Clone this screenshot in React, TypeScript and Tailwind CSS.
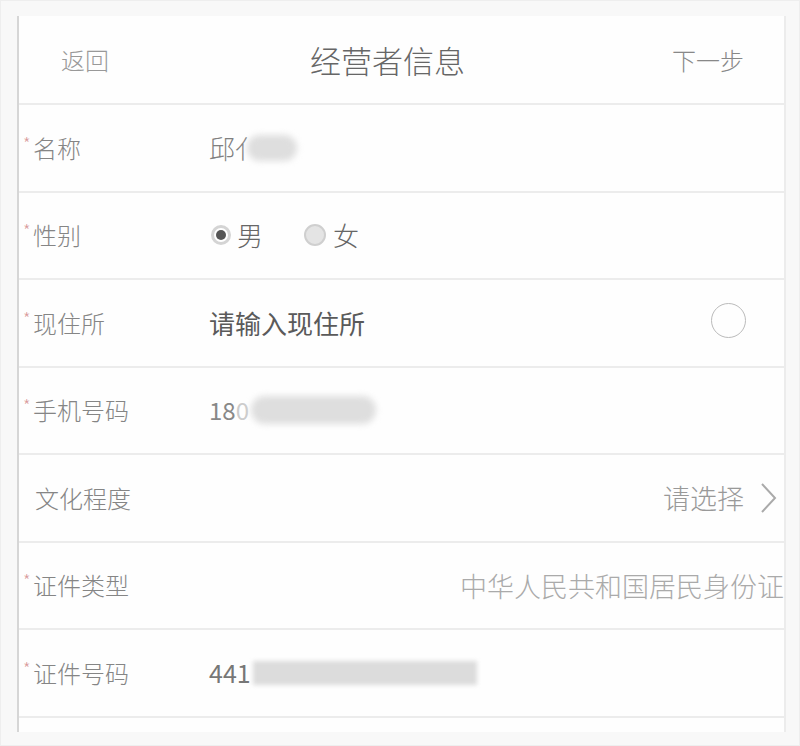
import React from "react";

const font = { fontFamily: '"Noto Sans CJK SC", "Noto Sans", sans-serif' };

function Star() {
  return <span className="text-[#d99a9a] text-[17px] leading-none self-start -mt-[2px] w-[10px]">*</span>;
}

function Row({ children, h = "h-[87.5px]" }: { children: React.ReactNode; h?: string }) {
  return (
    <div className={`${h} flex items-center border-b-2 border-[#ececec] shrink-0`}>{children}</div>
  );
}

function Label({ text, star = true }: { text: string; star?: boolean }) {
  return (
    <div className="w-[192px] pl-[4px] flex items-center text-[24px] text-[#858585] font-light">
      {star ? <Star /> : <span className="w-[12px]" />}
      <span className="leading-none">{text}</span>
    </div>
  );
}

function Blur({ w, h }: { w: string; h: string }) {
  return <div className={`${w} ${h} bg-[#dedede] rounded-full blur-[3px]`} />;
}

export default function App() {
  return (
    <div className="w-[800px] h-[746px] bg-[#f8f8f8] pt-[15px] pl-[16px] pr-[13px] border border-[#eeeeee]" style={font}>
      <div className="h-[716px] bg-[#fefefe] border-l-2 border-[#d6d6d6] border-r-2 border-r-[#ececec] flex flex-col">
        <div className="h-[89px] flex items-center justify-between border-b-2 border-[#ececec] shrink-0 px-[42px] pr-[40px]">
          <span className="text-[24px] text-[#999] font-light leading-none">返回</span>
          <span className="text-[31px] text-[#666] font-light leading-none -ml-[6px]">经营者信息</span>
          <span className="text-[24px] text-[#888] font-light leading-none">下一步</span>
        </div>
        <Row>
          <Label text="名称" />
          <div className="flex items-center -ml-[2px]">
            <span className="text-[26px] text-[#808080] font-light leading-none">邱亻</span>
            <div className="-ml-[14px]"><Blur w="w-[50px]" h="h-[26px]" /></div>
          </div>
        </Row>
        <Row>
          <Label text="性别" />
          <div className="flex items-center text-[26px] text-[#666] font-light">
            <span className="w-[20px] h-[20px] rounded-full border-[3px] border-[#d4d4d4] bg-white flex items-center justify-center">
              <span className="w-[10px] h-[10px] rounded-full bg-[#555]" />
            </span>
            <span className="ml-[6px] leading-none">男</span>
            <span className="ml-[41px] w-[22px] h-[22px] rounded-full border-2 border-[#cfcfcf] bg-[#e4e4e4]" />
            <span className="ml-[7px] leading-none">女</span>
          </div>
        </Row>
        <Row>
          <Label text="现住所" />
          <span className="text-[26px] text-[#5a5a5a] leading-none flex-1 -ml-[2px]">请输入现住所</span>
          <span className="w-[35px] h-[35px] rounded-full border-[1.5px] border-[#bbb] mr-[38px] -mt-[4px]" />
        </Row>
        <Row>
          <Label text="手机号码" />
          <div className="flex items-center -ml-[2px]">
            <span className="text-[24px] text-[#888] leading-none">18</span>
            <span className="text-[24px] text-[#ccc] leading-none">0</span>
            <div className="ml-[2px]"><Blur w="w-[125px]" h="h-[28px]" /></div>
          </div>
        </Row>
        <Row>
          <Label text="文化程度" star={false} />
          <div className="flex-1 flex items-center justify-end pr-[6px]">
            <span className="text-[27px] text-[#999] font-light leading-none">请选择</span>
            <svg width="18" height="32" viewBox="0 0 18 32" className="ml-[16px]">
              <path d="M2 2 L15 16 L2 30" fill="none" stroke="#aaa" strokeWidth="2" />
            </svg>
          </div>
        </Row>
        <Row>
          <Label text="证件类型" />
          <div className="flex-1 flex justify-end">
            <span className="text-[27px] text-[#aaa] font-light leading-none whitespace-nowrap">中华人民共和国居民身份证</span>
          </div>
        </Row>
        <Row>
          <Label text="证件号码" />
          <div className="flex items-center -ml-[2px]">
            <span className="text-[25px] text-[#777] leading-none">441</span>
            <div className="ml-[2px]"><div className="w-[224px] h-[24px] bg-[#dcdcdc] blur-[2px]" /></div>
          </div>
        </Row>
        <div className="flex-1" />
      </div>
    </div>
  );
}
